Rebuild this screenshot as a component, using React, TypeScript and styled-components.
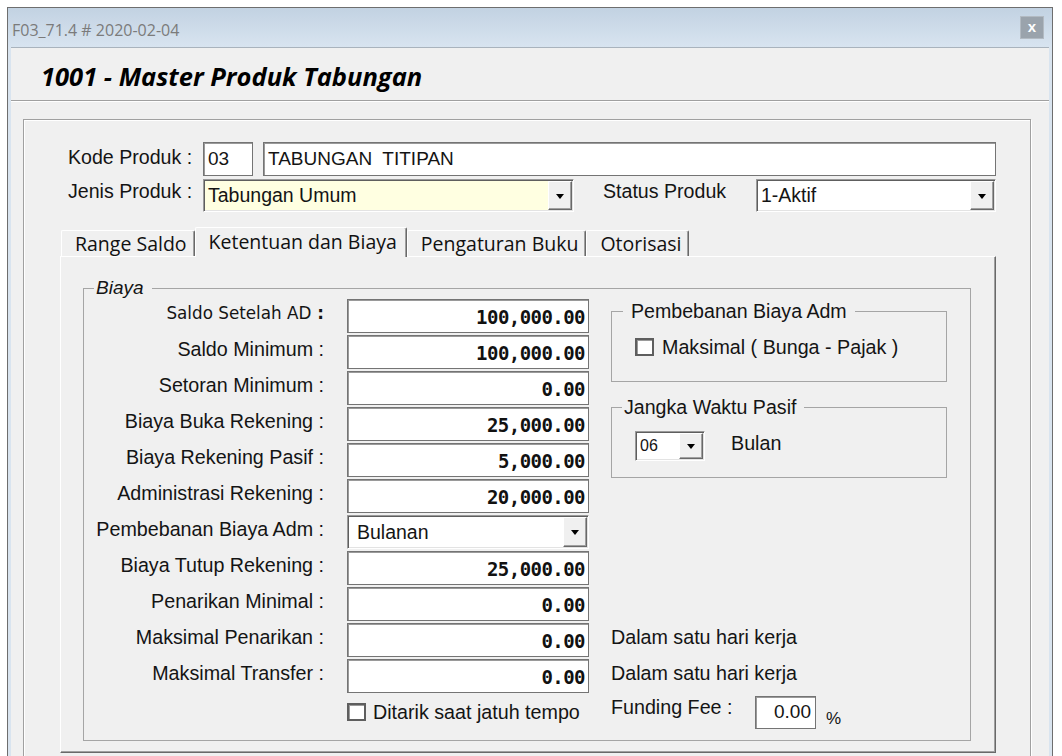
import React from "react";
import styled, { createGlobalStyle } from "styled-components";

const GlobalStyle = createGlobalStyle`
  * {
    box-sizing: border-box;
  }
  html,
  body {
    margin: 0;
    padding: 0;
    background: #ffffff;
  }
  body {
    font-family: "Liberation Sans", Arial, sans-serif;
    color: #141414;
    overflow: hidden;
  }
`;

const Page = styled.div`
  width: 1062px;
  height: 756px;
  padding: 7px 9px 0 7px;
  overflow: hidden;
`;

const Window = styled.div`
  width: 1046px;
  height: 790px;
  display: flex;
  flex-direction: column;
  border: 1px solid #6e6e6e;
  border-bottom: none;
  background: #d9e4ef;
`;

const TitleBar = styled.div`
  flex: none;
  height: 39px;
  display: flex;
  align-items: center;
  justify-content: space-between;
  padding: 0 8px 0 4px;
  background: linear-gradient(#c2d2e2, #d8e4f0);
`;

const TitleText = styled.span`
  font-family: "Open Sans", "Noto Sans", sans-serif;
  font-size: 16px;
  color: #7b7b7b;
  margin-top: 5px;
`;

const CloseButton = styled.div`
  width: 24px;
  height: 23px;
  display: flex;
  align-items: center;
  justify-content: center;
  background: #9aa3ac;
  border: 1px solid #b2bac2;
  color: #ffffff;
  font: bold 15px "Liberation Sans", Arial, sans-serif;
  padding-bottom: 3px;
`;

const Body = styled.div`
  flex: 1;
  margin: 0 3px;
  display: flex;
  flex-direction: column;
  background: #f0f0f0;
  border-top: 1px solid #a9b3bd;
`;

const Header = styled.div`
  flex: none;
  height: 53px;
  display: flex;
  align-items: center;
  padding: 4px 0 0 30px;
  border-bottom: 1px solid #a0a0a0;
  box-shadow: 0 1px 0 #ffffff;
`;

const HeaderTitle = styled.h1`
  margin: 0;
  font-family: "Open Sans", "Noto Sans", sans-serif;
  font-size: 25.5px;
  font-weight: 700;
  font-style: italic;
  color: #000000;
`;

const Content = styled.div`
  flex: 1;
  padding: 18px 18px 0 12px;
`;

const Panel = styled.div`
  height: 100%;
  border: 1px solid #a0a0a0;
  box-shadow: inset 1px 1px 0 #ffffff, 1px 1px 0 #ffffff;
  padding: 22px 34px 0 36px;
`;

const FormRow = styled.div<{ $gap?: number }>`
  display: flex;
  align-items: flex-start;
  margin-bottom: ${(p) => p.$gap ?? 0}px;
`;

const FormLabel = styled.div<{ $w: number; $top: number; $indent?: number; $left?: number }>`
  flex: none;
  width: ${(p) => p.$w}px;
  margin-left: ${(p) => p.$left ?? 0}px;
  padding-left: ${(p) => p.$indent ?? 0}px;
  padding-top: ${(p) => p.$top}px;
  font-size: 19.6px;
  line-height: 22px;
  white-space: nowrap;
`;

const TextBox = styled.div<{ $w?: number }>`
  ${(p) => (p.$w ? `width: ${p.$w}px; flex: none; margin-right: 10px;` : "flex: 1;")}
  height: 34px;
  display: flex;
  align-items: center;
  padding-left: 4px;
  background: #ffffff;
  border: 1px solid #747474;
  box-shadow: inset 1px 1px 0 #9a9a9a;
  font-size: 19px;
  white-space: pre;
`;

const Combo = styled.div<{ $w: number; $h: number; $bg?: string }>`
  flex: none;
  width: ${(p) => p.$w}px;
  height: ${(p) => p.$h}px;
  display: flex;
  padding: 1px;
  background: ${(p) => p.$bg ?? "#ffffff"};
  border: 1px solid;
  border-color: #9a9a9a #ffffff #ffffff #9a9a9a;
  box-shadow: inset 1px 1px 0 #5e5e5e, inset -1px -1px 0 #e3e3e3;
`;

const ComboText = styled.span<{ $size?: number; $pad?: number }>`
  flex: 1;
  display: flex;
  align-items: center;
  padding-left: ${(p) => p.$pad ?? 3}px;
  font-size: ${(p) => p.$size ?? 19.5}px;
  white-space: nowrap;
`;

const DropButton = styled.span`
  flex: none;
  width: 24px;
  display: flex;
  align-items: center;
  justify-content: center;
  background: #f0f0f0;
  border: 1px solid;
  border-color: #ffffff #696969 #696969 #ffffff;
  box-shadow: inset -1px -1px 0 #a0a0a0;

  &::after {
    content: "";
    margin-top: 1px;
    border-left: 4.5px solid transparent;
    border-right: 4.5px solid transparent;
    border-top: 5px solid #000000;
  }
`;

const TabStrip = styled.div`
  margin-top: 15px;
  height: 29px;
  display: flex;
  align-items: flex-end;
  padding-left: 1px;
`;

const Tab = styled.div<{ $active?: boolean }>`
  position: relative;
  z-index: ${(p) => (p.$active ? 2 : 1)};
  height: ${(p) => (p.$active ? 30 : 26)}px;
  margin-bottom: ${(p) => (p.$active ? -1 : 0)}px;
  display: flex;
  align-items: center;
  padding: ${(p) => (p.$active ? "0 9px 2px 13px" : "0 7px 0 13px")};
  font-family: "Open Sans", "Noto Sans", sans-serif;
  font-size: 19.5px;
  color: #111111;
  background: #f0f0f0;
  border-top: 1px solid #ffffff;
  border-left: 1px solid #ffffff;
  border-right: 1px solid #696969;
  box-shadow: inset -1px 0 0 #a0a0a0;
  border-radius: 2px 2px 0 0;
  white-space: nowrap;
`;

const TabPanel = styled.div`
  background: #f0f0f0;
  border: 1px solid;
  border-color: #ffffff #696969 #696969 #ffffff;
  box-shadow: inset -1px -1px 0 #a0a0a0;
  padding: 21px 24px 11px 22px;
`;

const GroupBox = styled.fieldset<{ $h?: number }>`
  margin: 0;
  min-width: 0;
  padding: 0;
  ${(p) => (p.$h ? `height: ${p.$h}px;` : "")}
  border: 1px solid #a5a5a5;
`;

const BiayaBox = styled(GroupBox)`
  padding: 1px 23px 11px 0;
`;

const Legend = styled.legend<{ $indent: number; $pad: number; $italic?: boolean }>`
  margin-left: ${(p) => p.$indent}px;
  padding: 0 8px 0 ${(p) => p.$pad}px;
  font-size: ${(p) => (p.$italic ? 19 : 19.6)}px;
  line-height: 20px;
  font-style: ${(p) => (p.$italic ? "italic" : "normal")};
  white-space: nowrap;
`;

const BiayaGrid = styled.div`
  display: grid;
  grid-template-columns: 241px 242px 336px;
  grid-template-rows: repeat(12, 34px);
  column-gap: 22px;
  row-gap: 2px;
`;

const FieldLabel = styled.div<{ $row: number; $alt?: boolean }>`
  grid-column: 1;
  grid-row: ${(p) => p.$row};
  align-self: center;
  padding: 0 1px 6px 0;
  text-align: right;
  font-family: ${(p) =>
    p.$alt ? '"DejaVu Sans", Verdana, sans-serif' : '"Liberation Sans", Arial, sans-serif'};
  font-size: ${(p) => (p.$alt ? 16.8 : 19.7)}px;
  line-height: 22px;
  white-space: nowrap;

  b {
    font-weight: 700;
  }
`;

const AmountBox = styled.div<{ $row: number }>`
  grid-column: 2;
  grid-row: ${(p) => p.$row};
  display: flex;
  align-items: center;
  justify-content: flex-end;
  padding: 1px 3px 0 0;
  background: #ffffff;
  border: 1px solid #747474;
  box-shadow: inset 1px 1px 0 #9a9a9a;
  font-family: "DejaVu Sans Mono", monospace;
  font-weight: 700;
  font-size: 19px;
  letter-spacing: -0.55px;
  color: #111111;
`;

const ComboCell = styled.div<{ $row: number }>`
  grid-column: 2;
  grid-row: ${(p) => p.$row};
`;

const SideStack = styled.div`
  grid-column: 3;
  grid-row: 1 / span 6;
  display: flex;
  flex-direction: column;
  gap: 15px;
  padding-top: 2px;
`;

const GroupContent = styled.div<{ $top: number }>`
  display: flex;
  align-items: center;
  padding: ${(p) => p.$top}px 0 0 23px;
`;

const CheckRow = styled.div<{ $gap: number }>`
  display: flex;
  align-items: center;
  gap: ${(p) => p.$gap}px;
  height: 22px;
  font-size: 19.7px;
  white-space: nowrap;
`;

const CheckBox = styled.span`
  flex: none;
  width: 19px;
  height: 18px;
  background: #ffffff;
  border: 2px solid #5e5e5e;
  box-shadow: inset 1px 1px 0 #9a9a9a;
`;

const CheckCell = styled.div<{ $row: number }>`
  grid-column: 2;
  grid-row: ${(p) => p.$row};
  display: flex;
  align-items: center;
`;

const SideText = styled.span<{ $left?: number }>`
  margin-left: ${(p) => p.$left ?? 0}px;
  padding-bottom: 5px;
  font-size: 19.7px;
`;

const NoteText = styled.div<{ $row: number }>`
  grid-column: 3;
  grid-row: ${(p) => p.$row};
  align-self: center;
  padding-bottom: 7px;
  font-size: 19.7px;
  line-height: 22px;
  white-space: nowrap;
`;

const FundingRow = styled.div<{ $row: number }>`
  grid-column: 3;
  grid-row: ${(p) => p.$row};
  display: flex;
  align-items: center;
`;

const FundingLabel = styled.span`
  width: 144px;
  padding-bottom: 9px;
  font-size: 19.7px;
  white-space: nowrap;
`;

const FundingBox = styled.div`
  width: 61px;
  height: 33px;
  display: flex;
  align-items: center;
  justify-content: flex-end;
  padding-right: 4px;
  background: #ffffff;
  border: 1px solid #747474;
  box-shadow: inset 1px 1px 0 #9a9a9a;
  font-size: 19px;
`;

const Percent = styled.span`
  margin-left: 10px;
  padding-top: 14px;
  font-size: 17px;
`;

type TAmountRow = {
  label: string;
  value?: string;
  combo?: string;
  alt?: boolean;
};

const amountRows: TAmountRow[] = [
  { label: "Saldo Setelah AD", value: "100,000.00", alt: true },
  { label: "Saldo Minimum", value: "100,000.00" },
  { label: "Setoran Minimum", value: "0.00" },
  { label: "Biaya Buka Rekening", value: "25,000.00" },
  { label: "Biaya Rekening Pasif", value: "5,000.00" },
  { label: "Administrasi Rekening", value: "20,000.00" },
  { label: "Pembebanan Biaya Adm", combo: "Bulanan" },
  { label: "Biaya Tutup Rekening", value: "25,000.00" },
  { label: "Penarikan Minimal", value: "0.00" },
  { label: "Maksimal Penarikan", value: "0.00" },
  { label: "Maksimal Transfer", value: "0.00" },
];

const tabs = ["Range Saldo", "Ketentuan dan Biaya", "Pengaturan Buku", "Otorisasi"];

const App = () => {
  return (
    <Page>
      <GlobalStyle />
      <Window>
        <TitleBar>
          <TitleText>F03_71.4 # 2020-02-04</TitleText>
          <CloseButton>x</CloseButton>
        </TitleBar>
        <Body>
          <Header>
            <HeaderTitle>1001 - Master Produk Tabungan</HeaderTitle>
          </Header>
          <Content>
            <Panel>
              <FormRow $gap={3}>
                <FormLabel $w={143} $indent={8} $top={4}>
                  Kode Produk :
                </FormLabel>
                <TextBox $w={50}>03</TextBox>
                <TextBox>TABUNGAN  TITIPAN</TextBox>
              </FormRow>
              <FormRow>
                <FormLabel $w={143} $indent={8} $top={1}>
                  Jenis Produk :
                </FormLabel>
                <Combo $w={371} $h={33} $bg="#ffffe1">
                  <ComboText>Tabungan Umum</ComboText>
                  <DropButton />
                </Combo>
                <FormLabel $w={153} $left={29} $top={1}>
                  Status Produk
                </FormLabel>
                <Combo $w={240} $h={33}>
                  <ComboText>1-Aktif</ComboText>
                  <DropButton />
                </Combo>
              </FormRow>

              <TabStrip>
                {tabs.map((t, i) => (
                  <Tab key={t} $active={i === 1}>
                    {t}
                  </Tab>
                ))}
              </TabStrip>
              <TabPanel>
                <BiayaBox>
                  <Legend $indent={10} $pad={2} $italic>
                    Biaya
                  </Legend>
                  <BiayaGrid>
                    {amountRows.map((r, i) => (
                      <React.Fragment key={r.label}>
                        <FieldLabel $row={i + 1} $alt={r.alt}>
                          {r.label}
                          {r.alt ? <b> :</b> : " :"}
                        </FieldLabel>
                        {r.combo ? (
                          <ComboCell $row={i + 1}>
                            <Combo $w={242} $h={34}>
                              <ComboText $pad={8}>{r.combo}</ComboText>
                              <DropButton />
                            </Combo>
                          </ComboCell>
                        ) : (
                          <AmountBox $row={i + 1}>{r.value}</AmountBox>
                        )}
                      </React.Fragment>
                    ))}

                    <CheckCell $row={12}>
                      <CheckRow $gap={7}>
                        <CheckBox />
                        Ditarik saat jatuh tempo
                      </CheckRow>
                    </CheckCell>

                    <SideStack>
                      <GroupBox $h={81}>
                        <Legend $indent={11} $pad={8}>
                          Pembebanan Biaya Adm
                        </Legend>
                        <GroupContent $top={15}>
                          <CheckRow $gap={8}>
                            <CheckBox />
                            Maksimal ( Bunga - Pajak )
                          </CheckRow>
                        </GroupContent>
                      </GroupBox>
                      <GroupBox $h={81}>
                        <Legend $indent={10} $pad={2}>
                          Jangka Waktu Pasif
                        </Legend>
                        <GroupContent $top={14}>
                          <Combo $w={70} $h={30}>
                            <ComboText $size={16}>06</ComboText>
                            <DropButton />
                          </Combo>
                          <SideText $left={26}>Bulan</SideText>
                        </GroupContent>
                      </GroupBox>
                    </SideStack>

                    <NoteText $row={10}>Dalam satu hari kerja</NoteText>
                    <NoteText $row={11}>Dalam satu hari kerja</NoteText>
                    <FundingRow $row={12}>
                      <FundingLabel>Funding Fee :</FundingLabel>
                      <FundingBox>0.00</FundingBox>
                      <Percent>%</Percent>
                    </FundingRow>
                  </BiayaGrid>
                </BiayaBox>
              </TabPanel>
            </Panel>
          </Content>
        </Body>
      </Window>
    </Page>
  );
};

export default App;
